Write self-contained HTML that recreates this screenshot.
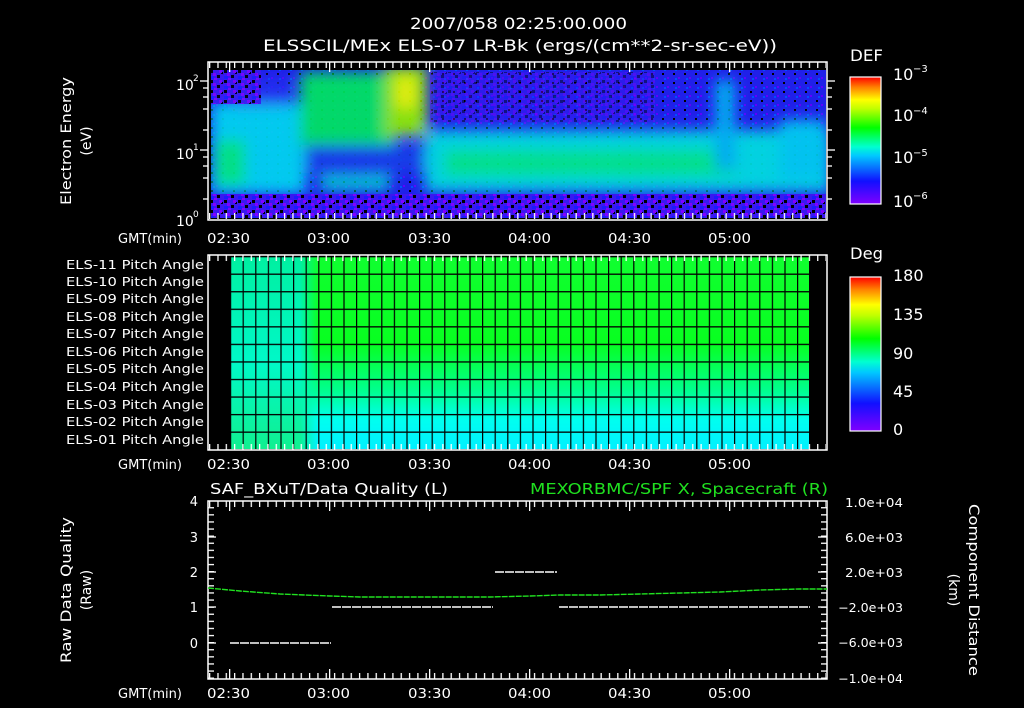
<!DOCTYPE html>
<html><head><meta charset="utf-8"><style>
html,body{margin:0;padding:0;background:#000;width:1024px;height:708px;overflow:hidden}
svg text{font-family:"DejaVu Sans","Liberation Sans",sans-serif;fill:#fff}
</style></head><body>
<svg width="1024" height="708" viewBox="0 0 1024 708" xmlns="http://www.w3.org/2000/svg">
<defs>
<linearGradient id="cb" x1="0" y1="1" x2="0" y2="0">
<stop offset="0" stop-color="#8000ff"/><stop offset="0.18" stop-color="#1010ff"/><stop offset="0.38" stop-color="#00c8ff"/><stop offset="0.45" stop-color="#00ffd0"/><stop offset="0.6" stop-color="#00ff00"/><stop offset="0.75" stop-color="#c0ff00"/><stop offset="0.82" stop-color="#ffff00"/><stop offset="0.92" stop-color="#ff8000"/><stop offset="1" stop-color="#ff0000"/>
</linearGradient>
<linearGradient id="pa" x1="0" y1="0" x2="0" y2="1">
<stop offset="0" stop-color="#10ff30"/><stop offset="0.45" stop-color="#08ff20"/><stop offset="0.7" stop-color="#00ff90"/><stop offset="0.85" stop-color="#00fff0"/><stop offset="1" stop-color="#00f0ff"/>
</linearGradient>
<linearGradient id="pl" x1="0" y1="0" x2="0" y2="1">
<stop offset="0" stop-color="#00f0a0"/><stop offset="0.55" stop-color="#00f8c8"/><stop offset="1" stop-color="#10f090"/>
</linearGradient>
<linearGradient id="ph" x1="0" y1="0" x2="1" y2="0">
<stop offset="0" stop-color="#fff" stop-opacity="0"/><stop offset="1" stop-color="#fff" stop-opacity="1"/>
</linearGradient>
<mask id="fm"><rect x="300" y="256" width="18" height="193" fill="url(#ph)"/></mask>
<pattern id="sp" width="14" height="10" patternUnits="userSpaceOnUse">
<rect width="14" height="10" fill="#3a18f0"/>
<rect x="0" y="0" width="3" height="3" fill="#000"/><rect x="7" y="5" width="3" height="3" fill="#000"/><rect x="11" y="2" width="2" height="2" fill="#000"/>
<rect x="3" y="3" width="3" height="3" fill="#8000ff"/><rect x="9" y="0" width="3" height="3" fill="#8000ff"/><rect x="0" y="6" width="4" height="3" fill="#1a1aff"/><rect x="4" y="8" width="3" height="2" fill="#8000ff"/>
</pattern>
<pattern id="sp2" width="11" height="9" patternUnits="userSpaceOnUse">
<rect width="11" height="9" fill="#2020e8"/>
<rect x="2" y="1" width="2" height="2" fill="#000"/><rect x="7" y="5" width="2" height="2" fill="#6000ff"/><rect x="4" y="6" width="2" height="2" fill="#0050ff"/>
</pattern>
<filter id="bl" x="-10%" y="-10%" width="120%" height="120%"><feGaussianBlur stdDeviation="7"/></filter>
<pattern id="tkM" x="229" width="100" height="14" patternUnits="userSpaceOnUse"><rect width="1.3" height="14" fill="#fff"/></pattern>
<pattern id="tks" x="209" width="8.33" height="6" patternUnits="userSpaceOnUse"><rect width="1.3" height="6" fill="#fff"/></pattern>
<pattern id="gr" x="230" y="256" width="12.6" height="17.55" patternUnits="userSpaceOnUse"><rect width="1.2" height="17.55" fill="#000"/><rect width="12.6" height="1.3" fill="#000"/></pattern>
<pattern id="yt" y="500" width="8" height="7.1" patternUnits="userSpaceOnUse"><rect width="8" height="1.3" fill="#fff"/></pattern>
<clipPath id="tc"><rect x="211" y="70" width="615" height="148"/></clipPath>
</defs>

<text x="410" y="29" font-size="16" textLength="217" lengthAdjust="spacingAndGlyphs">2007/058 02:25:00.000</text>
<text x="263" y="51" font-size="16" textLength="514" lengthAdjust="spacingAndGlyphs">ELSSCIL/MEx ELS-07 LR-Bk  (ergs/(cm**2-sr-sec-eV))</text>

<!-- Top spectrogram -->
<rect x="211" y="70" width="615" height="148" fill="url(#sp2)"/>
<g clip-path="url(#tc)">
<g filter="url(#bl)" opacity="0.92">
<rect x="211" y="102" width="95" height="92" fill="#00d8f0"/>
<rect x="215" y="140" width="30" height="45" fill="#00f080"/>
<rect x="300" y="72" width="95" height="75" fill="#00e860"/>
<rect x="385" y="66" width="42" height="70" fill="#90f000"/>
<rect x="396" y="76" width="20" height="32" fill="#f0ff00"/>
<rect x="305" y="145" width="120" height="28" fill="#1840e8"/>
<rect x="320" y="176" width="70" height="14" fill="#00e0d0"/>
<rect x="425" y="130" width="405" height="62" fill="#00e0e0"/>
<rect x="445" y="150" width="290" height="26" fill="#00f088"/>
<rect x="715" y="80" width="20" height="90" fill="#00b8f0"/>
<rect x="780" y="120" width="45" height="60" fill="#00d0f0"/>
<rect x="230" y="80" width="60" height="25" fill="#2030f0"/>
</g>
</g>
<rect x="211" y="70" width="50" height="34" fill="url(#sp)" opacity="0.9"/>
<rect x="430" y="72" width="225" height="50" fill="url(#sp)" opacity="0.45"/>
<rect x="211" y="194" width="615" height="24" fill="url(#sp)"/>
<rect x="208" y="62" width="619" height="158" fill="none" stroke="#fff" stroke-width="1.5"/>
<rect x="209" y="62" width="617" height="6" fill="url(#tks)"/>
<rect x="209" y="213" width="617" height="6" fill="url(#tks)"/>
<rect x="209" y="62" width="617" height="10" fill="url(#tkM)"/>
<g stroke="#fff" stroke-width="1.3">
<line x1="200" y1="81" x2="208" y2="81"/><line x1="203" y1="88" x2="208" y2="88"/><line x1="203" y1="97" x2="208" y2="97"/><line x1="203" y1="109" x2="208" y2="109"/><line x1="203" y1="130" x2="208" y2="130"/>
<line x1="200" y1="150" x2="208" y2="150"/><line x1="203" y1="157" x2="208" y2="157"/><line x1="203" y1="166" x2="208" y2="166"/><line x1="203" y1="178" x2="208" y2="178"/><line x1="203" y1="199" x2="208" y2="199"/>
<line x1="827" y1="81" x2="835" y2="81"/><line x1="827" y1="88" x2="832" y2="88"/><line x1="827" y1="97" x2="832" y2="97"/><line x1="827" y1="109" x2="832" y2="109"/><line x1="827" y1="130" x2="832" y2="130"/>
<line x1="827" y1="150" x2="835" y2="150"/><line x1="827" y1="157" x2="832" y2="157"/><line x1="827" y1="166" x2="832" y2="166"/><line x1="827" y1="178" x2="832" y2="178"/><line x1="827" y1="199" x2="832" y2="199"/>
</g>
<text x="176" y="90" font-size="14">10</text><text x="193" y="81" font-size="9">2</text>
<text x="176" y="159" font-size="14">10</text><text x="193" y="150" font-size="9">1</text>
<text x="176" y="226" font-size="14">10</text><text x="193" y="217" font-size="9">0</text>
<text transform="translate(71,141) rotate(-90)" font-size="14" text-anchor="middle" textLength="128" lengthAdjust="spacingAndGlyphs">Electron Energy</text>
<text transform="translate(91,141) rotate(-90)" font-size="14" text-anchor="middle">(eV)</text>
<g font-size="13">
<text x="118" y="243" textLength="64" lengthAdjust="spacingAndGlyphs">GMT(min)</text>
<text x="207" y="243" textLength="43" lengthAdjust="spacingAndGlyphs">02:30</text><text x="307" y="243" textLength="43" lengthAdjust="spacingAndGlyphs">03:00</text><text x="408" y="243" textLength="43" lengthAdjust="spacingAndGlyphs">03:30</text><text x="508" y="243" textLength="43" lengthAdjust="spacingAndGlyphs">04:00</text><text x="608" y="243" textLength="43" lengthAdjust="spacingAndGlyphs">04:30</text><text x="708" y="243" textLength="43" lengthAdjust="spacingAndGlyphs">05:00</text>
</g>
<text x="850" y="61" font-size="16" textLength="33" lengthAdjust="spacingAndGlyphs">DEF</text>
<rect x="850" y="77" width="31" height="127" fill="url(#cb)" stroke="#fff" stroke-width="1.2"/>
<g font-size="16"><text x="893" y="80">10</text><text x="893" y="121">10</text><text x="893" y="163">10</text><text x="893" y="207">10</text></g>
<g font-size="10"><text x="913" y="72">−3</text><text x="913" y="114">−4</text><text x="913" y="156">−5</text><text x="913" y="199">−6</text></g>

<!-- Middle pitch angle -->
<rect x="230" y="256" width="90" height="193" fill="url(#pl)"/>
<rect x="318" y="256" width="491" height="193" fill="url(#pa)"/>
<rect x="300" y="256" width="18" height="193" fill="url(#pa)" mask="url(#fm)"/>
<rect x="230" y="256" width="580" height="193" fill="url(#gr)"/>
<rect x="208" y="255" width="619" height="195" fill="none" stroke="#fff" stroke-width="1.5"/>
<rect x="209" y="255" width="617" height="6" fill="url(#tks)"/>
<rect x="209" y="444" width="617" height="6" fill="url(#tks)"/>
<g font-size="12">
<text x="66" y="269" textLength="138" lengthAdjust="spacingAndGlyphs">ELS-11 Pitch Angle</text><text x="66" y="286" textLength="138" lengthAdjust="spacingAndGlyphs">ELS-10 Pitch Angle</text><text x="66" y="303" textLength="138" lengthAdjust="spacingAndGlyphs">ELS-09 Pitch Angle</text><text x="66" y="321" textLength="138" lengthAdjust="spacingAndGlyphs">ELS-08 Pitch Angle</text><text x="66" y="338" textLength="138" lengthAdjust="spacingAndGlyphs">ELS-07 Pitch Angle</text><text x="66" y="356" textLength="138" lengthAdjust="spacingAndGlyphs">ELS-06 Pitch Angle</text><text x="66" y="373" textLength="138" lengthAdjust="spacingAndGlyphs">ELS-05 Pitch Angle</text><text x="66" y="391" textLength="138" lengthAdjust="spacingAndGlyphs">ELS-04 Pitch Angle</text><text x="66" y="409" textLength="138" lengthAdjust="spacingAndGlyphs">ELS-03 Pitch Angle</text><text x="66" y="426" textLength="138" lengthAdjust="spacingAndGlyphs">ELS-02 Pitch Angle</text><text x="66" y="444" textLength="138" lengthAdjust="spacingAndGlyphs">ELS-01 Pitch Angle</text>
</g>
<g font-size="13">
<text x="118" y="469" textLength="64" lengthAdjust="spacingAndGlyphs">GMT(min)</text>
<text x="207" y="469" textLength="43" lengthAdjust="spacingAndGlyphs">02:30</text><text x="307" y="469" textLength="43" lengthAdjust="spacingAndGlyphs">03:00</text><text x="408" y="469" textLength="43" lengthAdjust="spacingAndGlyphs">03:30</text><text x="508" y="469" textLength="43" lengthAdjust="spacingAndGlyphs">04:00</text><text x="608" y="469" textLength="43" lengthAdjust="spacingAndGlyphs">04:30</text><text x="708" y="469" textLength="43" lengthAdjust="spacingAndGlyphs">05:00</text>
</g>
<text x="850" y="259" font-size="16" textLength="33" lengthAdjust="spacingAndGlyphs">Deg</text>
<rect x="850" y="277" width="31" height="154" fill="url(#cb)" stroke="#fff" stroke-width="1.2"/>
<g font-size="16"><text x="893" y="281">180</text><text x="893" y="320">135</text><text x="893" y="359">90</text><text x="893" y="397">45</text><text x="893" y="435">0</text></g>

<!-- Bottom -->
<text x="210" y="494" font-size="15" textLength="238" lengthAdjust="spacingAndGlyphs">SAF_BXuT/Data Quality (L)</text>
<text x="530" y="494" font-size="15" style="fill:#20e020" textLength="298" lengthAdjust="spacingAndGlyphs">MEXORBMC/SPF X, Spacecraft (R)</text>
<rect x="208" y="501" width="619" height="178" fill="none" stroke="#fff" stroke-width="1.5"/>
<rect x="209" y="501" width="617" height="6" fill="url(#tks)"/>
<rect x="209" y="673" width="617" height="6" fill="url(#tks)"/>
<rect x="209" y="501" width="617" height="10" fill="url(#tkM)"/>
<rect x="209" y="669" width="617" height="10" fill="url(#tkM)"/>
<rect x="208" y="501" width="6" height="178" fill="url(#yt)"/>
<rect x="821" y="501" width="6" height="178" fill="url(#yt)"/>
<g stroke="#fff" stroke-width="1.3">
<line x1="208" y1="537" x2="216" y2="537"/><line x1="208" y1="572" x2="216" y2="572"/><line x1="208" y1="607" x2="216" y2="607"/><line x1="208" y1="643" x2="216" y2="643"/>
<line x1="818" y1="537" x2="827" y2="537"/><line x1="818" y1="572" x2="827" y2="572"/><line x1="818" y1="607" x2="827" y2="607"/><line x1="818" y1="643" x2="827" y2="643"/>
</g>
<g stroke="#fff" stroke-width="1.5" stroke-dasharray="9,1">
<line x1="230" y1="643" x2="331" y2="643"/><line x1="332" y1="607" x2="493" y2="607"/><line x1="495" y1="572" x2="557" y2="572"/><line x1="559" y1="607" x2="810" y2="607"/>
</g>
<polyline points="208,588 240,591 280,594 330,596 360,597 400,597 450,597 490,597 530,596 560,595 600,595 640,594 680,593 720,592 760,590 800,589 827,589" fill="none" stroke="#20e020" stroke-width="1.4" stroke-dasharray="6,1"/>
<g font-size="13" text-anchor="end">
<text x="198" y="506">4</text><text x="198" y="542">3</text><text x="198" y="577">2</text><text x="198" y="612">1</text><text x="198" y="648">0</text>
</g>
<g font-size="12">
<text x="845" y="507" textLength="58" lengthAdjust="spacingAndGlyphs">1.0e+04</text><text x="845" y="542" textLength="58" lengthAdjust="spacingAndGlyphs">6.0e+03</text><text x="845" y="577" textLength="58" lengthAdjust="spacingAndGlyphs">2.0e+03</text><text x="838" y="612" textLength="65" lengthAdjust="spacingAndGlyphs">−2.0e+03</text><text x="838" y="647" textLength="65" lengthAdjust="spacingAndGlyphs">−6.0e+03</text><text x="838" y="683" textLength="65" lengthAdjust="spacingAndGlyphs">−1.0e+04</text>
</g>
<text transform="translate(71,590) rotate(-90)" font-size="14" text-anchor="middle" textLength="146" lengthAdjust="spacingAndGlyphs">Raw Data Quality</text>
<text transform="translate(91,590) rotate(-90)" font-size="14" text-anchor="middle">(Raw)</text>
<text transform="translate(969,590) rotate(90)" font-size="14" text-anchor="middle" textLength="172" lengthAdjust="spacingAndGlyphs">Component Distance</text>
<text transform="translate(949,590) rotate(90)" font-size="14" text-anchor="middle">(km)</text>
<g font-size="13">
<text x="118" y="698" textLength="64" lengthAdjust="spacingAndGlyphs">GMT(min)</text>
<text x="207" y="698" textLength="43" lengthAdjust="spacingAndGlyphs">02:30</text><text x="307" y="698" textLength="43" lengthAdjust="spacingAndGlyphs">03:00</text><text x="408" y="698" textLength="43" lengthAdjust="spacingAndGlyphs">03:30</text><text x="508" y="698" textLength="43" lengthAdjust="spacingAndGlyphs">04:00</text><text x="608" y="698" textLength="43" lengthAdjust="spacingAndGlyphs">04:30</text><text x="708" y="698" textLength="43" lengthAdjust="spacingAndGlyphs">05:00</text>
</g>
</svg>
</body></html>
